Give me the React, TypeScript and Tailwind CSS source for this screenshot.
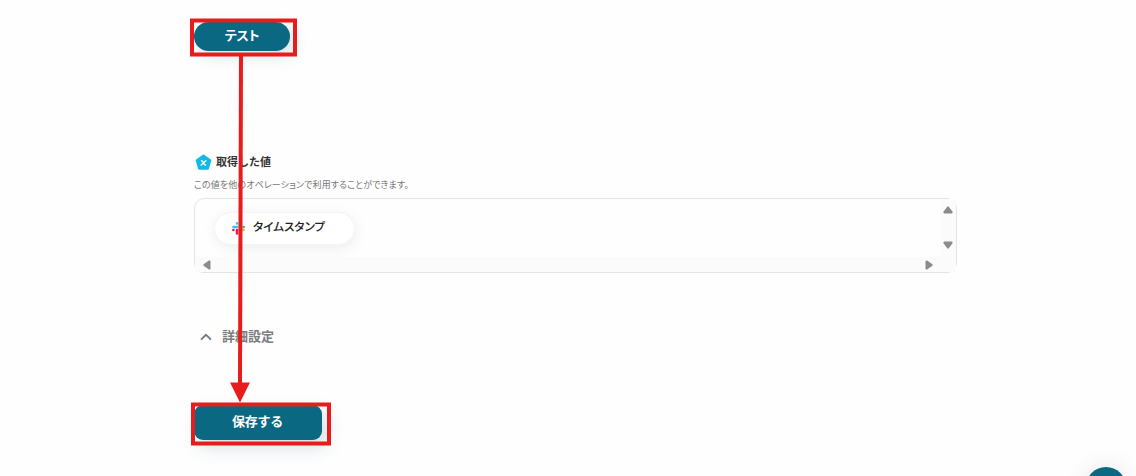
import React from 'react';

const ValueIcon = (): JSX.Element => (
	<svg className="mt-px" width="17" height="17" viewBox="0 0 17 17">
		<path d="M8.5 1.7 L15.1 6.5 L12.8 14.5 H4.2 L1.9 6.5 Z" fill="#14b8e6" stroke="#14b8e6" strokeWidth="2.4" strokeLinejoin="round" />
		<path d="M6.4 6.8 C8.8 6.2 8 11.6 10.6 11 M10.9 6.8 L6.1 11" fill="none" stroke="#fff" strokeWidth="1.3" strokeLinecap="round" />
	</svg>
);

const SlackIcon = (): JSX.Element => (
	<svg width="13" height="13" viewBox="0 0 12 12" fill="none" strokeWidth="2.3" strokeLinecap="round">
		<path d="M4.6 1.2 V1.3 M1.3 4.6 H4.6" stroke="#36c5f0" />
		<path d="M10.7 4.6 H10.8 M7.4 1.3 V4.6" stroke="#2eb67d" />
		<path d="M7.4 10.7 V10.8 M7.4 7.4 H10.7" stroke="#ecb22e" />
		<path d="M1.2 7.4 H1.3 M4.6 7.4 V10.7" stroke="#e01e5a" />
	</svg>
);

const ScrollArrow = ({ className }: { className: string }): JSX.Element => (
	<svg className={className} width="10" height="8" viewBox="0 0 10 8">
		<path d="M5 1.6 L8.4 6.3 H1.6 Z" fill="#8b8b8b" stroke="#8b8b8b" strokeWidth="2.4" strokeLinejoin="round" />
	</svg>
);

const Annotations = (): JSX.Element => (
	<svg className="absolute left-0 top-0 pointer-events-none" width="1136" height="476" viewBox="0 0 1136 476">
		<g fill="none" stroke="#e81c1c" strokeWidth="4">
			<rect x="192" y="20.5" width="103" height="34" />
			<rect x="193" y="404.5" width="136" height="39" />
			<path d="M241 56 L240 384" />
		</g>
		<path d="M230 382.5 H250 L240 402.5 Z" fill="#e81c1c" />
	</svg>
);

const App = (): JSX.Element => {
	return (
		<main className="relative w-[1136px] h-[476px] overflow-hidden bg-[#fefefe] font-['Noto_Sans_CJK_JP',sans-serif]">
			<div className="flex flex-col items-start w-[763px] ml-[194px] pt-[22px]">
				<button className="w-24 h-[29px] pb-1 flex items-center justify-center rounded-full bg-[#0b6882] text-white text-[13px] font-bold tracking-[-0.2px] [font-feature-settings:'palt'] shadow-[4px_5px_16px_rgba(30,60,70,0.16)]">テスト</button>

				<section className="w-full mt-[102px]">
					<div className="flex items-center h-[17px] pl-px">
						<ValueIcon />
						<h2 className="ml-1 text-[11px] leading-[17px] font-bold text-[#333333]">取得した値</h2>
					</div>
					<p className="mt-[9px] h-3 text-[9px] leading-3 tracking-[0.12px] text-[#777777] whitespace-nowrap [font-feature-settings:'palt']">この値を他のオペレーションで利用することができます。</p>
					<div className="mt-[7px] w-full h-[75px] flex rounded-[10px] border border-[#e4e4e4]">
						<div className="flex-1 flex flex-col">
							<div className="flex-1 pl-[19px] pt-[13px]">
								<div className="w-[141px] h-[33px] pl-[17px] flex items-center rounded-full border border-[#f5f5f5] bg-white shadow-[1px_3px_14px_rgba(0,0,0,0.07)]">
									<SlackIcon />
									<span className="ml-2 pb-[5px] text-[11.6px] leading-4 font-medium text-[#222222] [font-feature-settings:'palt']">タイムスタンプ</span>
								</div>
							</div>
							<div className="h-[15px] px-[7px] flex items-center justify-between bg-[#fbfbfb]">
								<ScrollArrow className="-rotate-90" />
								<ScrollArrow className="rotate-90" />
							</div>
						</div>
						<div className="w-[15px] pt-[7px] pb-[23px] pr-px flex flex-col items-center justify-between bg-[#fbfbfb]">
							<ScrollArrow className="" />
							<ScrollArrow className="rotate-180" />
						</div>
					</div>
				</section>

				<div className="flex items-center h-5 mt-[53px] pl-1.5 text-[#777777]">
					<svg width="12" height="8" viewBox="0 0 12 8" className="mt-0.5">
						<path d="M1 6.6 L6 1.8 L11 6.6" fill="none" stroke="currentColor" strokeWidth="1.8" />
					</svg>
					<span className="ml-2.5 pb-px text-[13px] leading-5 font-bold text-[#7c7c7c]">詳細設定</span>
				</div>

				<button className="w-32 h-[35px] mt-[59px] pb-1 pr-px flex items-center justify-center rounded-[9px] bg-[#0b6882] text-white text-[13px] font-bold tracking-[-0.2px] shadow-[5px_7px_18px_rgba(30,60,70,0.17)]">保存する</button>
			</div>

			<div className="absolute left-[1086px] top-[467px] size-10 rounded-full bg-[#0b6882] shadow-[0_0_24px_rgba(0,0,0,0.1)]" />
			<Annotations />
		</main>
	);
};

export default App;
